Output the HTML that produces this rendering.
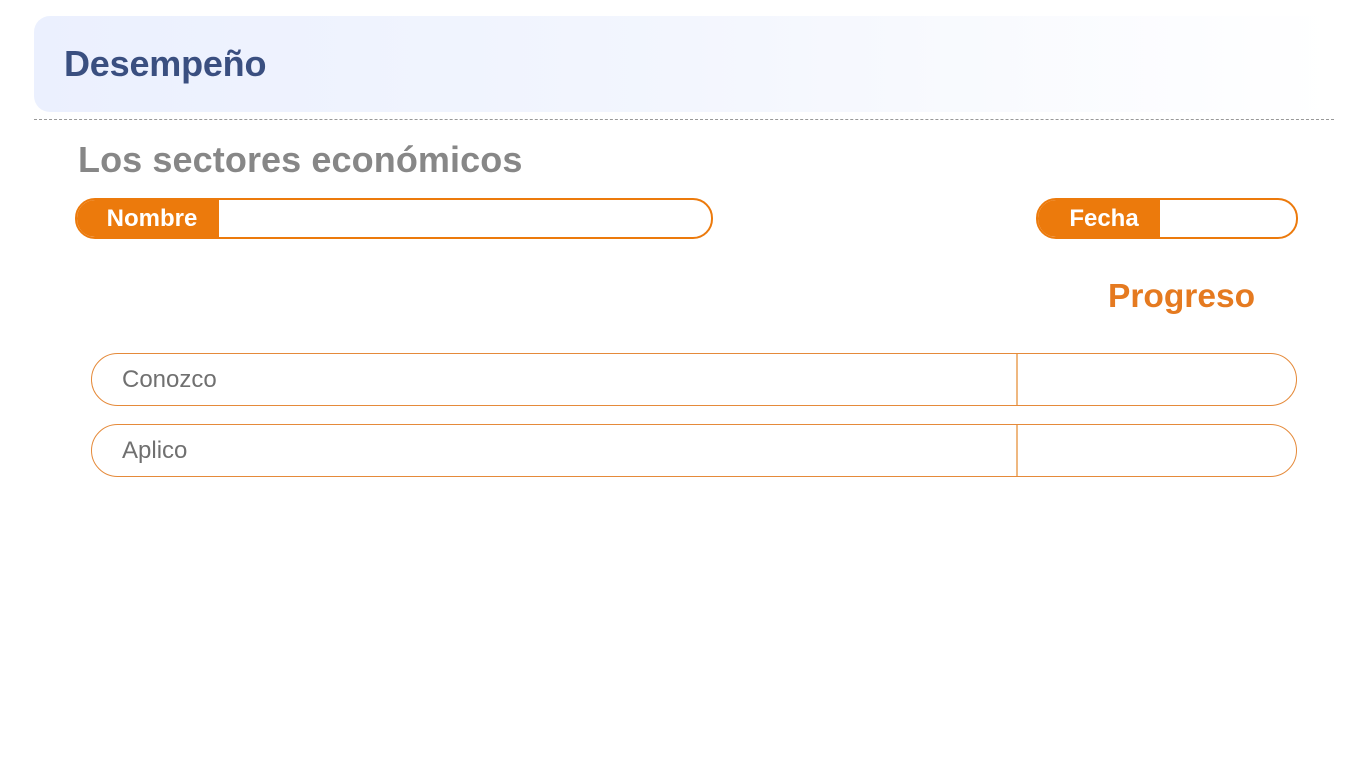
<!DOCTYPE html>
<html><head><meta charset="utf-8"><style>
*{margin:0;padding:0;box-sizing:border-box}
body{width:1366px;height:768px;background:#fff;font-family:"Liberation Sans",sans-serif;position:relative;overflow:hidden}
.hdr{position:absolute;left:34px;top:16px;width:1300px;height:96px;border-radius:16px;background:linear-gradient(90deg,#ebf0fe 0%,#f3f6fe 50%,#fff 100%)}
.hdr span{position:absolute;left:30px;top:27px;font-size:36px;font-weight:bold;color:#3a4f80;letter-spacing:-0.2px}
.dash{position:absolute;left:34px;top:119px;width:1300px;border-top:1px dashed #999}
.t{position:absolute;left:78px;top:139px;font-size:36px;font-weight:bold;color:#878787;letter-spacing:0.1px}
.pill{position:absolute;height:41px;border:2px solid #ec7a0c;border-radius:20px;overflow:hidden}
.pill b{position:absolute;left:0;top:0;bottom:0;background:#ec7a0c;color:#fff;font-size:24px;display:flex;align-items:center;justify-content:center}
.prog{position:absolute;left:1108px;top:278px;font-size:33.5px;font-weight:bold;color:#e57a20}
.row{position:absolute;left:91px;width:1206px;height:53px;border:1px solid #e58a3a;border-radius:27px}
.row span{position:absolute;left:30px;top:12px;font-size:24px;color:#707070}
.row i{position:absolute;left:924px;top:0;bottom:0;border-left:2px solid #efb880}
</style></head><body>
<div class="hdr"><span>Desempeño</span></div>
<div class="dash"></div>
<div class="t">Los sectores económicos</div>
<div class="pill" style="left:75px;top:198px;width:638px"><b style="width:142px;padding-left:8px">Nombre</b></div>
<div class="pill" style="left:1036px;top:198px;width:262px"><b style="width:122px;padding-left:10px">Fecha</b></div>
<div class="prog">Progreso</div>
<div class="row" style="top:353px"><span>Conozco</span><i></i></div>
<div class="row" style="top:424px"><span>Aplico</span><i></i></div>
</body></html>
